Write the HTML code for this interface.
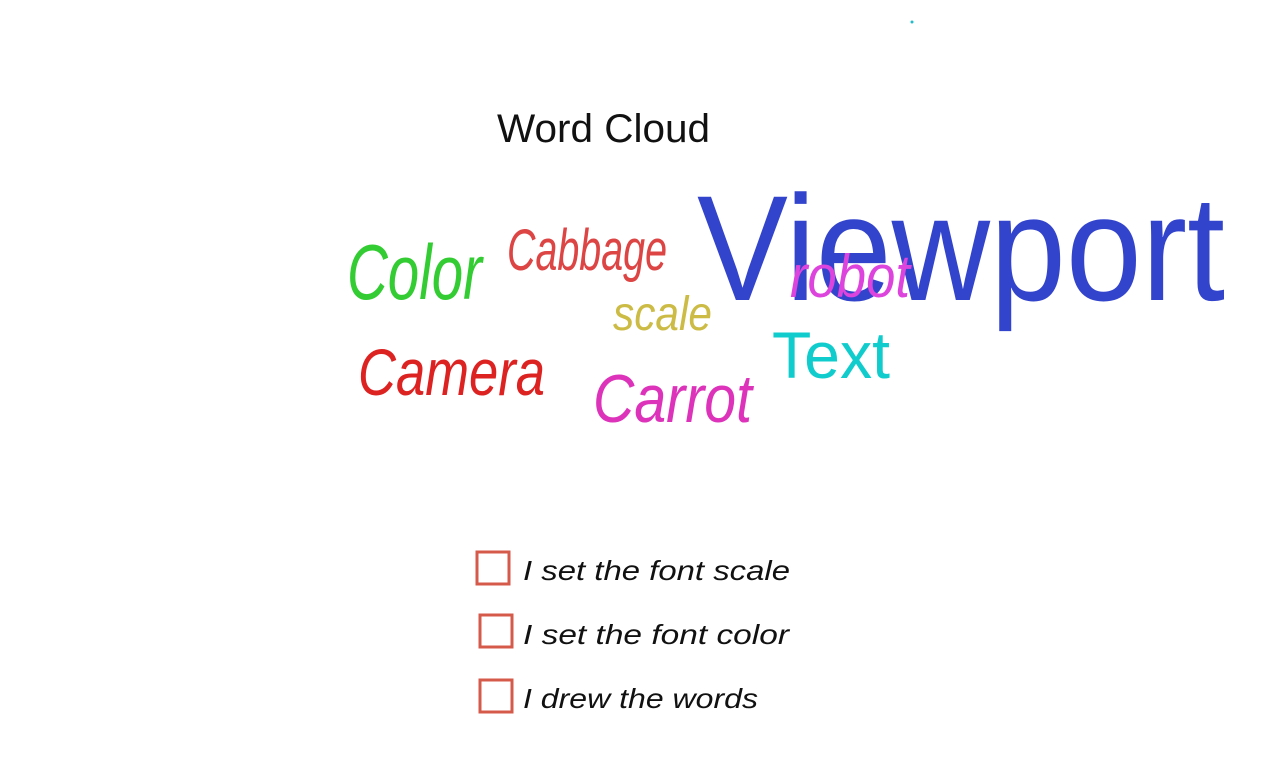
<!DOCTYPE html>
<html><head><meta charset="utf-8"><style>
html,body{margin:0;padding:0;background:#fff;width:1280px;height:778px;overflow:hidden}
svg{display:block}
text{font-family:"Liberation Sans","DejaVu Sans",sans-serif}
</style></head><body>
<svg width="1280" height="778" viewBox="0 0 1280 778">
<circle cx="912" cy="22" r="1.5" fill="#2bc"/>
<text x="497" y="142" font-size="40" textLength="213" lengthAdjust="spacingAndGlyphs" fill="#111">Word Cloud</text>
<text x="347" y="299" font-size="78" textLength="135" lengthAdjust="spacingAndGlyphs" fill="#3c3" font-style="italic">Color</text>
<text x="507" y="270" font-size="58" textLength="160" lengthAdjust="spacingAndGlyphs" fill="#d44" font-style="italic">Cabbage</text>
<text x="613" y="330" font-size="48" textLength="99" lengthAdjust="spacingAndGlyphs" fill="#cb4" font-style="italic">scale</text>
<text x="697" y="300" font-size="150" textLength="528" lengthAdjust="spacingAndGlyphs" fill="#3344cc" font-weight="300">Viewport</text>
<text x="790" y="297" font-size="60" textLength="120" lengthAdjust="spacingAndGlyphs" fill="#d4d" font-style="italic">robot</text>
<text x="772" y="378" font-size="66" textLength="118" lengthAdjust="spacingAndGlyphs" fill="#1cc">Text</text>
<text x="358" y="395" font-size="66" textLength="187" lengthAdjust="spacingAndGlyphs" fill="#d22" font-style="italic">Camera</text>
<text x="593" y="422" font-size="68" textLength="159" lengthAdjust="spacingAndGlyphs" fill="#d3b" font-style="italic">Carrot</text>
<rect x="477" y="552" width="32" height="32" fill="none" stroke="#d65a4a" stroke-width="3"/>
<rect x="480" y="615" width="32" height="32" fill="none" stroke="#d65a4a" stroke-width="3"/>
<rect x="480" y="680" width="32" height="32" fill="none" stroke="#d65a4a" stroke-width="3"/>
<text x="523" y="580" font-size="28" textLength="267" lengthAdjust="spacingAndGlyphs" fill="#111" font-style="italic">I set the font scale</text>
<text x="523" y="644" font-size="28" textLength="266" lengthAdjust="spacingAndGlyphs" fill="#111" font-style="italic">I set the font color</text>
<text x="523" y="708" font-size="28" textLength="235" lengthAdjust="spacingAndGlyphs" fill="#111" font-style="italic">I drew the words</text>
</svg>
</body></html>
